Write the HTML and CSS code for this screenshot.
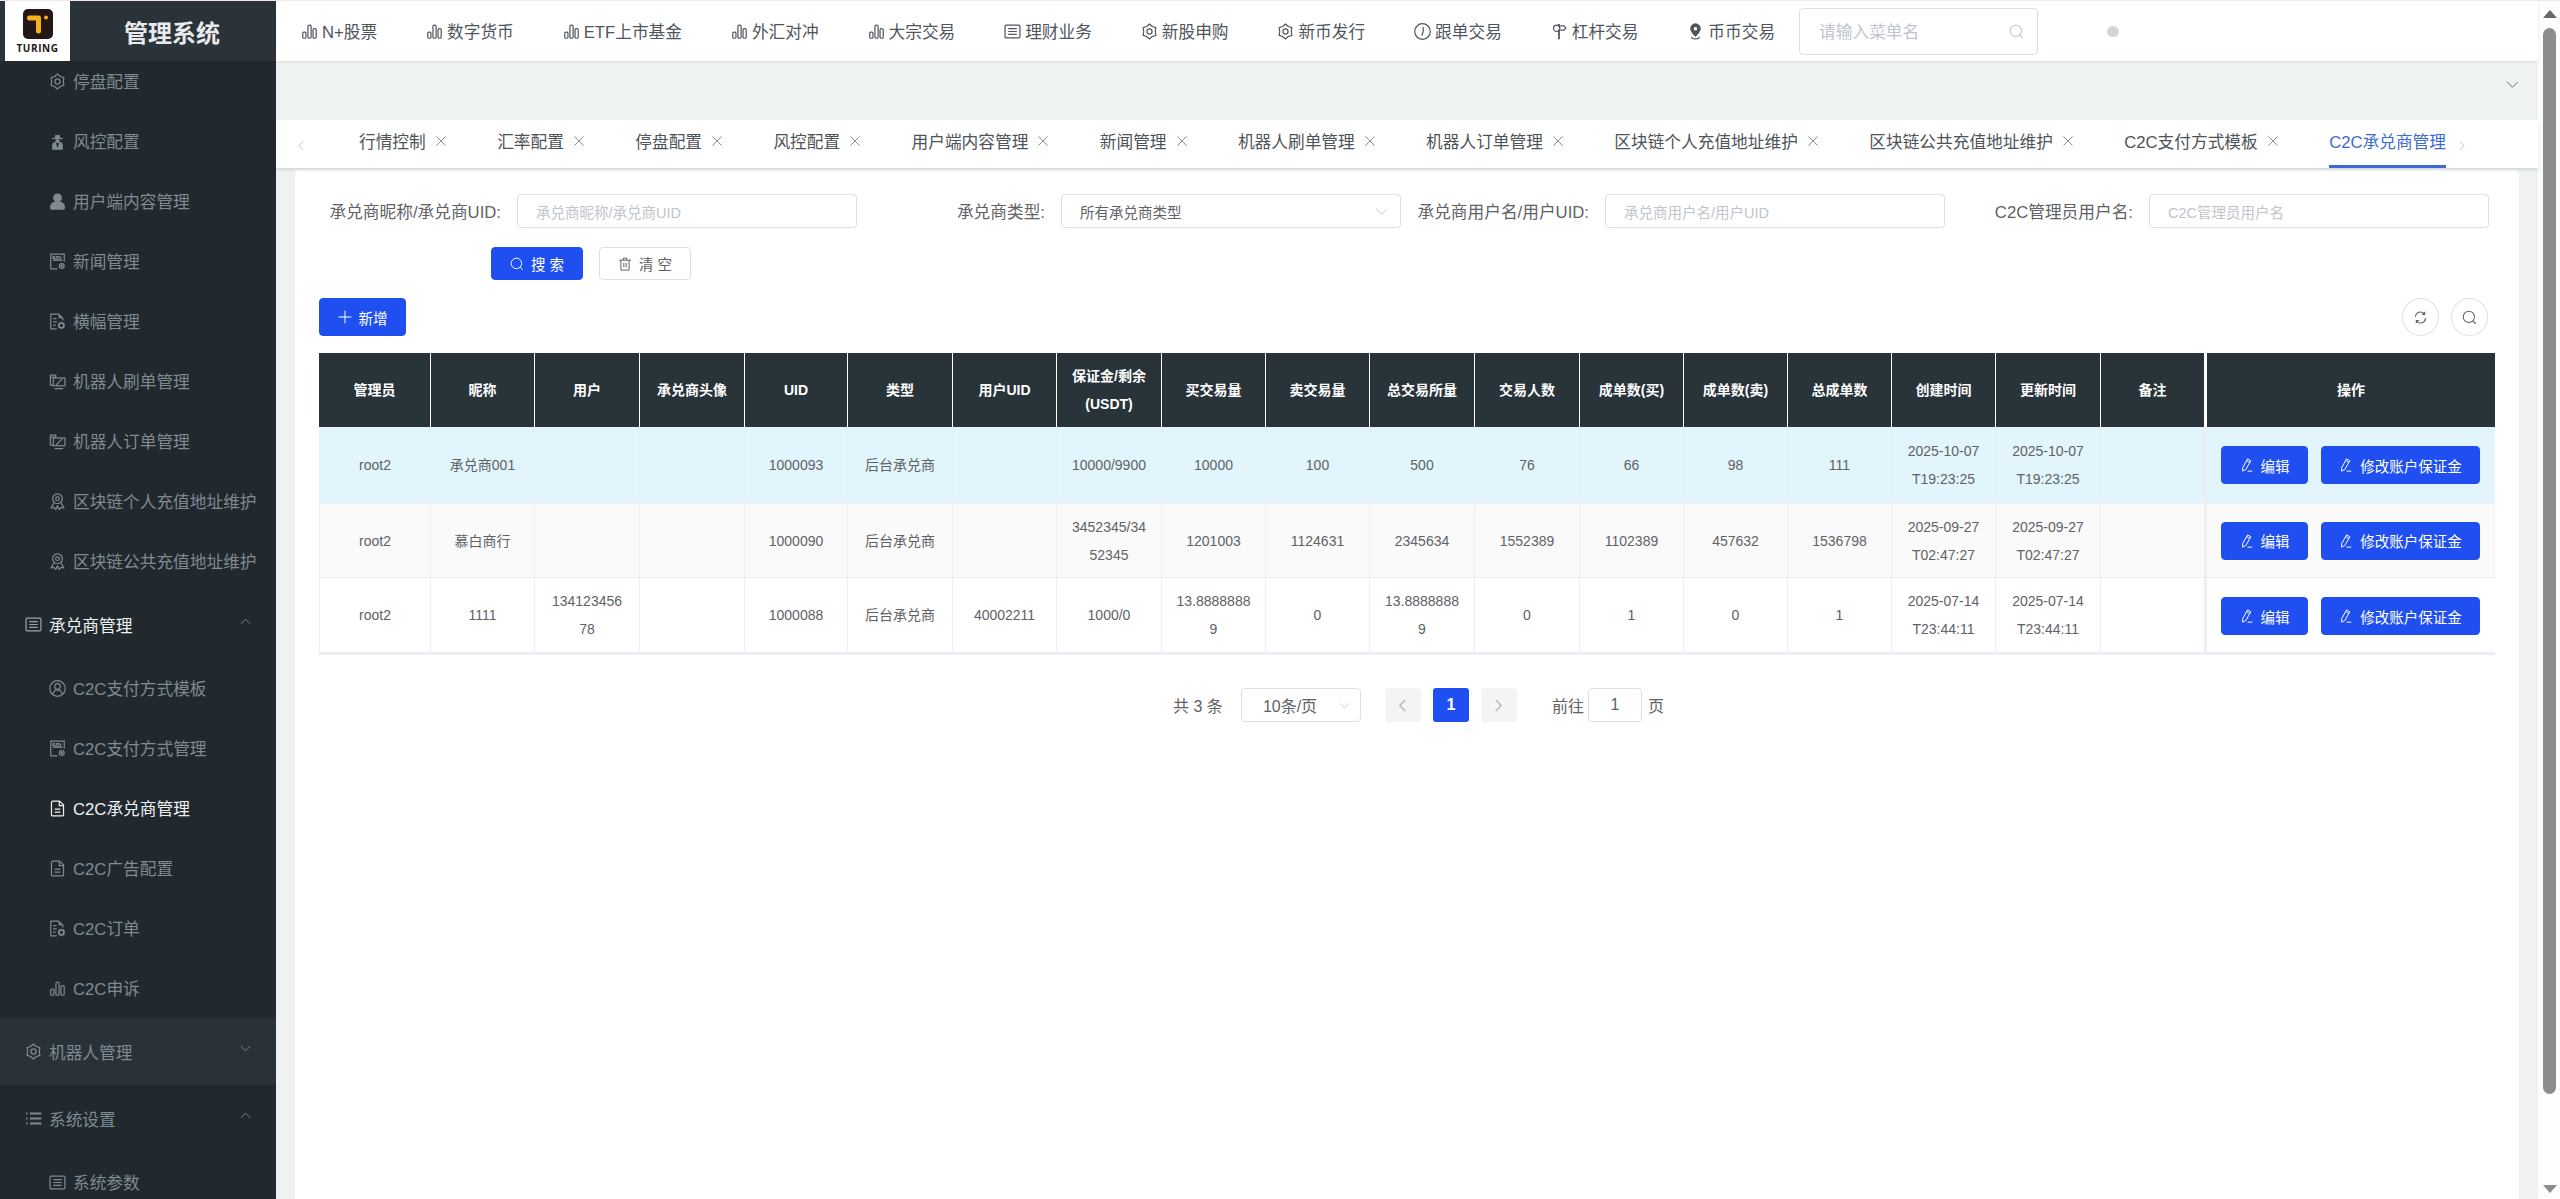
FILE: index.html
```html
<!DOCTYPE html>
<html lang="zh-CN">
<head>
  <meta charset="UTF-8">
  <meta name="viewport" content="width=device-width, initial-scale=1.0">
  <title>管理系统</title>
  <link rel="stylesheet" href="styles.css">
</head>
<body>
<svg class="sprite" aria-hidden="true">
  <symbol id="i-bars" viewBox="0 0 24 24"><rect x="2.500" y="13" width="4.500" height="8.500" rx="1.500"/><rect x="9.800" y="3" width="4.500" height="18.500" rx="1.800"/><rect x="17" y="8" width="4.500" height="13.500" rx="1.800"/></symbol>
  <symbol id="i-gear" viewBox="0 0 24 24"><path stroke-linejoin="round" d="M12 1.500L16 5 21 6.500 20.200 12 21 17.500 16 19 12 22.500 8 19 3 17.500 3.800 12 3 6.500 8 5Z"/><circle cx="12" cy="12" r="3.600"/></symbol>
  <symbol id="i-spy" viewBox="0 0 24 24"><path class="solid" d="M8 7l1.200-5 2.800 1 2.800-1L16 7z"/><rect class="solid" x="4.500" y="7" width="15" height="1.600"/><circle class="solid" cx="12" cy="11.300" r="3"/><path class="solid" d="M4.500 23.500v-6.500c0-2.500 2-4 5-4.500L11.500 20h1l2-7.500c3 .5 5 2 5 4.500v6.500z"/></symbol>
  <symbol id="i-user" viewBox="0 0 24 24"><circle class="solid" cx="12" cy="7" r="6.200"/><path class="solid" d="M1.500 21v-2c0-4.500 5-7.500 10.500-7.500s10.500 3 10.500 7.500v2c0 1.500-1 2.500-2.500 2.500H4c-1.500 0-2.500-1-2.500-2.500z"/></symbol>
  <symbol id="i-sql" viewBox="0 0 24 24"><path d="M12 22.500H2.500v-21h19v11"/><path d="M5.500 5h3.200M5.500 5v2.700h3.200v2.800H5.500M11 5h3v5.500h-3zM16.500 5v5.500h2.500"/><circle cx="18" cy="18.500" r="3.400"/><circle cx="18" cy="18.500" r="1"/></symbol>
  <symbol id="i-docgear" viewBox="0 0 24 24"><path d="M11 22.500H2.500v-21h11l6 6v3"/><path class="solid" d="M13.500 1.500l6 6h-6z"/><path d="M6 8h4.500M6 12.500h5M6 17h3.500"/><circle cx="17.500" cy="17.500" r="3.600" stroke-width="2.600"/></symbol>
  <symbol id="i-robot" viewBox="0 0 24 24"><path d="M6 17H2V3h7.500v4"/><path d="M2 6h7.500"/><rect x="6" y="7" width="16.500" height="11"/><path d="M10 17L19 8M8 22h12"/></symbol>
  <symbol id="i-medal" viewBox="0 0 24 24"><circle cx="12" cy="8" r="6.800"/><circle cx="12" cy="8" r="2.600"/><path stroke-linejoin="round" d="M7.500 13L3 21l4.500-.5 2 3 2.500-5.500 2.500 5.500 2-3 4.500.5L16.500 13"/></symbol>
  <symbol id="i-usercircle" viewBox="0 0 24 24"><circle cx="12" cy="12" r="11"/><circle cx="12" cy="9.200" r="4"/><path d="M5.500 20c.8-3.800 3.500-6 6.500-6s5.700 2.200 6.500 6"/></symbol>
  <symbol id="i-doc" viewBox="0 0 24 24"><path stroke-linejoin="round" d="M3.500 3.500c0-1 .7-2 1.800-2H15l5.500 5.500v14c0 1-.7 1.500-1.800 1.500H5.300c-1.100 0-1.800-.5-1.800-1.500z"/><path d="M14.500 1.500V8h6M8 13h8M8 17h8"/></symbol>
  <symbol id="i-tickets" viewBox="0 0 24 24"><rect x="1.500" y="3" width="21" height="18" rx="1.500"/><path d="M6 8h12M6 12h12M6 16h12"/></symbol>
  <symbol id="i-list" viewBox="0 0 24 24"><path stroke-width="2.800" d="M7 5h16M7 12h16M7 19h16M1.500 5h2M1.500 12h2M1.500 19h2"/></symbol>
  <symbol id="i-clock" viewBox="0 0 24 24"><circle cx="12" cy="12" r="11"/><path d="M13 5.500v6.500l-2 6"/></symbol>
  <symbol id="i-lever" viewBox="0 0 24 24"><path class="solid" d="M10 1.500h2.500v4.500H10zM10 9h2.500v14H10z"/><circle cx="8" cy="7.500" r="4.500"/><path d="M13 4h5.500l2.500 3-2.500 3H13"/></symbol>
  <symbol id="i-pin" viewBox="0 0 24 24"><path class="solid" fill-rule="evenodd" d="M12 .5a7.500 7.500 0 0 0-7.500 7.500c0 4.500 7.500 11.500 7.500 11.500s7.500-7 7.500-11.500A7.500 7.500 0 0 0 12 .5zm0 5a2.500 2.500 0 1 1 0 5 2.500 2.500 0 0 1 0-5z"/><path d="M6.500 19.500c0 1.500 2.500 3 5.500 3s5.500-1.500 5.500-3"/></symbol>
  <symbol id="i-search" viewBox="0 0 24 24"><circle cx="11" cy="11" r="9"/><path d="M17.500 17.500L22 22"/></symbol>
  <symbol id="i-down" viewBox="0 0 24 24"><path d="M2 7l10 10L22 7"/></symbol>
  <symbol id="i-up" viewBox="0 0 24 24"><path d="M2 17L12 7l10 10"/></symbol>
  <symbol id="i-left" viewBox="0 0 24 24"><path d="M17 2L7 12l10 10"/></symbol>
  <symbol id="i-right" viewBox="0 0 24 24"><path d="M7 2l10 10L7 22"/></symbol>
  <symbol id="i-close" viewBox="0 0 24 24"><path d="M1 1l22 22M23 1L1 23"/></symbol>
  <symbol id="i-trash" viewBox="0 0 24 24"><path d="M2 5.500h20M9 5.500V2h6v3.500M5 5.500V22.500h14V5.500M10 10v7.500M14 10v7.500"/></symbol>
  <symbol id="i-refresh" viewBox="0 0 24 24"><path d="M4 11a8 8 0 0 1 14-5M20 13a8 8 0 0 1-14 5"/><path class="solid" d="M19.500 2v6h-6zM4.500 22v-6h6z"/></symbol>
  <symbol id="i-edit" viewBox="0 0 24 24"><path stroke-linejoin="round" d="M13 1.500l5.500 3.200-8.500 15L4.500 22.500l.2-6.200zM11.500 4.500l5.500 3.200M13 22.500h8"/></symbol>
  <symbol id="i-plus" viewBox="0 0 24 24"><path d="M12 1v22M1 12h22"/></symbol>
</svg>

<div class="page">
  <aside class="sidebar">
    <div class="brand">
      <div class="logo">
        <svg class="logo-mark" viewBox="0 0 30 30">
          <rect width="30" height="30" rx="5" fill="#231815"/>
          <path d="M6.500 9H15.500V22" fill="none" stroke="#f9b21d" stroke-width="5" stroke-linecap="round" stroke-linejoin="round"/>
          <circle cx="23" cy="8.500" r="2" fill="#f9b21d"/>
        </svg>
        <span class="logo-text">TURING</span>
      </div>
      <div class="brand-name">管理系统</div>
    </div>
    <div class="menu-scroll">
      <ul class="menu">
        <li class="sub"><svg class="ic"><use href="#i-gear"/></svg>停盘配置</li>
        <li class="sub"><svg class="ic"><use href="#i-spy"/></svg>风控配置</li>
        <li class="sub"><svg class="ic"><use href="#i-user"/></svg>用户端内容管理</li>
        <li class="sub"><svg class="ic"><use href="#i-sql"/></svg>新闻管理</li>
        <li class="sub"><svg class="ic"><use href="#i-docgear"/></svg>横幅管理</li>
        <li class="sub"><svg class="ic"><use href="#i-robot"/></svg>机器人刷单管理</li>
        <li class="sub"><svg class="ic"><use href="#i-robot"/></svg>机器人订单管理</li>
        <li class="sub"><svg class="ic"><use href="#i-medal"/></svg>区块链个人充值地址维护</li>
        <li class="sub"><svg class="ic"><use href="#i-medal"/></svg>区块链公共充值地址维护</li>
        <li class="group open"><svg class="ic"><use href="#i-tickets"/></svg>承兑商管理<svg class="ic-chev"><use href="#i-up"/></svg></li>
        <li class="sub"><svg class="ic"><use href="#i-usercircle"/></svg>C2C支付方式模板</li>
        <li class="sub"><svg class="ic"><use href="#i-sql"/></svg>C2C支付方式管理</li>
        <li class="sub active"><svg class="ic"><use href="#i-doc"/></svg>C2C承兑商管理</li>
        <li class="sub"><svg class="ic"><use href="#i-doc"/></svg>C2C广告配置</li>
        <li class="sub"><svg class="ic"><use href="#i-docgear"/></svg>C2C订单</li>
        <li class="sub"><svg class="ic"><use href="#i-bars"/></svg>C2C申诉</li>
        <li class="group hover"><svg class="ic"><use href="#i-gear"/></svg>机器人管理<svg class="ic-chev"><use href="#i-down"/></svg></li>
        <li class="group"><svg class="ic"><use href="#i-list"/></svg>系统设置<svg class="ic-chev"><use href="#i-up"/></svg></li>
        <li class="sub"><svg class="ic"><use href="#i-tickets"/></svg>系统参数</li>
      </ul>
    </div>
  </aside>

  <main class="main">
    <header class="topnav">
      <a class="nav-item"><svg class="ic"><use href="#i-bars"/></svg>N+股票</a>
      <a class="nav-item"><svg class="ic"><use href="#i-bars"/></svg>数字货币</a>
      <a class="nav-item"><svg class="ic"><use href="#i-bars"/></svg>ETF上市基金</a>
      <a class="nav-item"><svg class="ic"><use href="#i-bars"/></svg>外汇对冲</a>
      <a class="nav-item"><svg class="ic"><use href="#i-bars"/></svg>大宗交易</a>
      <a class="nav-item"><svg class="ic"><use href="#i-tickets"/></svg>理财业务</a>
      <a class="nav-item"><svg class="ic"><use href="#i-gear"/></svg>新股申购</a>
      <a class="nav-item"><svg class="ic"><use href="#i-gear"/></svg>新币发行</a>
      <a class="nav-item"><svg class="ic"><use href="#i-clock"/></svg>跟单交易</a>
      <a class="nav-item"><svg class="ic"><use href="#i-lever"/></svg>杠杆交易</a>
      <a class="nav-item"><svg class="ic"><use href="#i-pin"/></svg>币币交易</a>
      <div class="menu-search"><span>请输入菜单名</span><svg class="ic-search"><use href="#i-search"/></svg></div>
      <i class="nav-dot"></i>
    </header>

    <div class="crumb-bar"><svg class="ic-crumb"><use href="#i-down"/></svg></div>

    <nav class="tabs">
      <svg class="tab-arrow tab-prev"><use href="#i-left"/></svg>
      <a class="tab">行情控制<svg class="tab-x"><use href="#i-close"/></svg></a>
      <a class="tab">汇率配置<svg class="tab-x"><use href="#i-close"/></svg></a>
      <a class="tab">停盘配置<svg class="tab-x"><use href="#i-close"/></svg></a>
      <a class="tab">风控配置<svg class="tab-x"><use href="#i-close"/></svg></a>
      <a class="tab">用户端内容管理<svg class="tab-x"><use href="#i-close"/></svg></a>
      <a class="tab">新闻管理<svg class="tab-x"><use href="#i-close"/></svg></a>
      <a class="tab">机器人刷单管理<svg class="tab-x"><use href="#i-close"/></svg></a>
      <a class="tab">机器人订单管理<svg class="tab-x"><use href="#i-close"/></svg></a>
      <a class="tab">区块链个人充值地址维护<svg class="tab-x"><use href="#i-close"/></svg></a>
      <a class="tab">区块链公共充值地址维护<svg class="tab-x"><use href="#i-close"/></svg></a>
      <a class="tab">C2C支付方式模板<svg class="tab-x"><use href="#i-close"/></svg></a>
      <a class="tab active">C2C承兑商管理</a>
      <svg class="tab-arrow tab-next"><use href="#i-right"/></svg>
    </nav>

    <section class="card">
      <div class="search-form">
        <div class="form-item"><label>承兑商昵称/承兑商UID:</label><div class="input placeholder">承兑商昵称/承兑商UID</div></div>
        <div class="form-item"><label>承兑商类型:</label><div class="input select">所有承兑商类型<svg class="ic-select"><use href="#i-down"/></svg></div></div>
        <div class="form-item"><label>承兑商用户名/用户UID:</label><div class="input placeholder">承兑商用户名/用户UID</div></div>
        <div class="form-item"><label>C2C管理员用户名:</label><div class="input placeholder">C2C管理员用户名</div></div>
      </div>
      <div class="form-actions">
        <button class="btn btn-primary btn-form"><svg class="ic-btn"><use href="#i-search"/></svg>搜 索</button>
        <button class="btn btn-plain btn-form"><svg class="ic-btn"><use href="#i-trash"/></svg>清 空</button>
      </div>
      <div class="toolbar">
        <button class="btn btn-primary btn-add"><svg class="ic-btn"><use href="#i-plus"/></svg>新增</button>
        <div class="tool-icons">
          <button class="btn-circle"><svg class="ic-tool"><use href="#i-refresh"/></svg></button>
          <button class="btn-circle"><svg class="ic-tool"><use href="#i-search"/></svg></button>
        </div>
      </div>

      <table class="data-table">
        <colgroup>
          <col class="w112"><col class="w104"><col class="w105"><col class="w105"><col class="w103"><col class="w105"><col class="w104"><col class="w105"><col class="w104"><col class="w104"><col class="w105"><col class="w105"><col class="w104"><col class="w104"><col class="w104"><col class="w104"><col class="w105"><col class="w104"><col class="w290">
        </colgroup>
        <thead>
          <tr>
            <th>管理员</th><th>昵称</th><th>用户</th><th>承兑商头像</th><th>UID</th><th>类型</th><th>用户UID</th><th>保证金/剩余(USDT)</th><th>买交易量</th><th>卖交易量</th><th>总交易所量</th><th>交易人数</th><th>成单数(买)</th><th>成单数(卖)</th><th>总成单数</th><th>创建时间</th><th>更新时间</th><th>备注</th><th class="col-action">操作</th>
          </tr>
        </thead>
        <tbody>
          <tr class="row-a">
            <td>root2</td><td>承兑商001</td><td></td><td></td><td>1000093</td><td>后台承兑商</td><td></td><td>10000/9900</td><td>10000</td><td>100</td><td>500</td><td>76</td><td>66</td><td>98</td><td>111</td><td>2025-10-07T19:23:25</td><td>2025-10-07T19:23:25</td><td></td>
            <td class="col-action"><div class="row-btns"><button class="btn btn-primary btn-edit"><svg class="ic-btn"><use href="#i-edit"/></svg>编辑</button><button class="btn btn-primary btn-margin"><svg class="ic-btn"><use href="#i-edit"/></svg>修改账户保证金</button></div></td>
          </tr>
          <tr class="row-b">
            <td>root2</td><td>慕白商行</td><td></td><td></td><td>1000090</td><td>后台承兑商</td><td></td><td>3452345/3452345</td><td>1201003</td><td>1124631</td><td>2345634</td><td>1552389</td><td>1102389</td><td>457632</td><td>1536798</td><td>2025-09-27T02:47:27</td><td>2025-09-27T02:47:27</td><td></td>
            <td class="col-action"><div class="row-btns"><button class="btn btn-primary btn-edit"><svg class="ic-btn"><use href="#i-edit"/></svg>编辑</button><button class="btn btn-primary btn-margin"><svg class="ic-btn"><use href="#i-edit"/></svg>修改账户保证金</button></div></td>
          </tr>
          <tr class="row-c">
            <td>root2</td><td>1111</td><td>13412345678</td><td></td><td>1000088</td><td>后台承兑商</td><td>40002211</td><td>1000/0</td><td>13.88888889</td><td>0</td><td>13.88888889</td><td>0</td><td>1</td><td>0</td><td>1</td><td>2025-07-14T23:44:11</td><td>2025-07-14T23:44:11</td><td></td>
            <td class="col-action"><div class="row-btns"><button class="btn btn-primary btn-edit"><svg class="ic-btn"><use href="#i-edit"/></svg>编辑</button><button class="btn btn-primary btn-margin"><svg class="ic-btn"><use href="#i-edit"/></svg>修改账户保证金</button></div></td>
          </tr>
        </tbody>
      </table>

      <div class="pager">
        <span class="pager-total">共 3 条</span>
        <div class="pager-size">10条/页<svg class="ic-size"><use href="#i-down"/></svg></div>
        <div class="pager-btns">
          <button class="page-btn"><svg class="ic-page"><use href="#i-left"/></svg></button>
          <button class="page-btn current">1</button>
          <button class="page-btn"><svg class="ic-page"><use href="#i-right"/></svg></button>
        </div>
        <span class="pager-jump">前往</span>
        <div class="pager-input">1</div>
        <span class="pager-unit">页</span>
      </div>
    </section>
  </main>

  <div class="scrollbar">
    <i class="sb-up"></i>
    <div class="sb-thumb"></div>
    <i class="sb-down"></i>
  </div>
</div>
</body>
</html>
```

FILE: styles.css
```css
* {
  box-sizing: border-box;
}

html, body {
  margin: 0;
  height: 100%;
  overflow: hidden;
}

body {
  font-family: "Liberation Sans", "Noto Sans CJK SC", sans-serif;
  font-size: 14px;
  color: #606266;
  background: #fff;
  border-top: 1px solid #f3e6ec;
}

.sprite {
  display: none;
}

svg {
  fill: none;
  stroke: currentColor;
  stroke-width: 1.7;
}

.solid {
  fill: currentColor;
  stroke: none;
}

button {
  font-family: inherit;
  cursor: pointer;
}

.page {
  display: flex;
  height: 100%;
}

/* sidebar */
.sidebar {
  width: 276px;
  flex: none;
  display: flex;
  flex-direction: column;
  background: #21292e;
  color: #7f8a91;
}

.brand {
  height: 60px;
  flex: none;
  display: flex;
  align-items: center;
  padding-left: 5px;
  background: #2a333a;
}

.logo {
  width: 65px;
  height: 60px;
  display: flex;
  flex-direction: column;
  align-items: center;
  padding-top: 8px;
  background: #fff;
}

.logo-mark {
  width: 30px;
  height: 30px;
  stroke: none;
}

.logo-text {
  margin-top: 2px;
  font-family: "Open Sans", sans-serif;
  font-size: 10px;
  line-height: 14px;
  font-weight: 700;
  letter-spacing: 0.6px;
  color: #231815;
}

.brand-name {
  margin-left: 54px;
  font-size: 24px;
  font-weight: 700;
  color: #e8eaec;
}

.menu-scroll {
  flex: 1;
  overflow: hidden;
}

.menu {
  list-style: none;
  margin: -10px 0 0;
  padding: 0;
  font-size: 16.7px;
}

.menu li {
  display: flex;
  align-items: center;
}

.menu .sub {
  height: 60px;
  padding-left: 49px;
}

.menu .group {
  height: 67px;
  padding: 0 25px;
}

.menu .group.open,
.menu .active {
  color: #eef1f2;
}

.menu .group.open .ic {
  color: #9aa3a9;
}

.menu .hover {
  background: #293239;
}

.ic {
  width: 17px;
  height: 17px;
  flex: none;
  margin-right: 7px;
}

.ic-chev {
  width: 11px;
  height: 11px;
  margin-left: auto;
  margin-top: -6px;
  color: #7f8a91;
  stroke-width: 2;
}

/* main */
.main {
  flex: 1;
  min-width: 0;
  display: flex;
  flex-direction: column;
  background: #eef2f3;
}

.topnav {
  height: 60px;
  flex: none;
  display: flex;
  align-items: center;
  padding-left: 25px;
  background: #fff;
  box-shadow: 0 1px 3px rgba(0, 0, 0, 0.1);
  position: relative;
  font-size: 16.7px;
  color: #50555b;
}

.nav-item {
  display: flex;
  align-items: center;
  margin-right: 48.9px;
  white-space: nowrap;
}

.nav-item .ic {
  width: 17px;
  height: 17px;
  margin-right: 4px;
}

.nav-item:last-of-type {
  margin-right: 24px;
}

.menu-search {
  width: 239px;
  height: 47px;
  display: flex;
  align-items: center;
  justify-content: space-between;
  padding: 0 13px 0 19px;
  border: 1px solid #dcdfe6;
  border-radius: 4px;
  color: #c0c4cc;
}

.ic-search {
  width: 15px;
  height: 15px;
}

.nav-dot {
  width: 12px;
  height: 11px;
  margin-left: 69px;
  border-radius: 50%;
  background: #d2d4d7;
}

.crumb-bar {
  height: 59px;
  flex: none;
  display: flex;
  align-items: center;
  justify-content: flex-end;
  padding: 0 19px 13px 0;
}

.ic-crumb {
  width: 13px;
  height: 13px;
  color: #606266;
}

.tabs {
  height: 48px;
  flex: none;
  display: flex;
  align-items: stretch;
  padding-left: 20px;
  background: #fff;
  box-shadow: 0 2px 3px rgba(80, 80, 110, 0.16);
  position: relative;
  font-size: 16.7px;
  color: #4e5358;
}

.tab {
  display: flex;
  align-items: center;
  padding-bottom: 3px;
  margin-right: 51.4px;
  white-space: nowrap;
  border-bottom: 3px solid transparent;
}

.tab.active {
  margin-right: 0;
  color: #3d6bd4;
  border-bottom-color: #3d6bd4;
}

.tab-x {
  width: 10px;
  height: 10px;
  margin-left: 10px;
  stroke-width: 1.8;
  color: #666;
}

.tab-arrow {
  width: 10px;
  height: 13px;
  align-self: center;
  margin-top: 3px;
  color: #a8abb2;
  stroke-width: 1.8;
}

.tab-prev {
  margin-right: 53px;
}

.tab-next {
  margin-left: 11px;
}

/* card */
.card {
  flex: 1;
  margin: 2px 19px 0;
  padding: 25px 24px 0;
  background: #fff;
  border-radius: 4px 4px 0 0;
}

.search-form {
  display: grid;
  grid-template-columns: repeat(4, 1fr);
  margin: -1px 6px 0 -6px;
}

.form-item {
  display: flex;
  align-items: center;
  justify-content: flex-end;
  font-size: 16.7px;
  color: #606266;
}

.form-item label {
  margin-right: 16px;
  white-space: nowrap;
}

.input {
  width: 340px;
  height: 34px;
  display: flex;
  align-items: center;
  padding: 0 12px 0 18px;
  border: 1px solid #dcdfe6;
  border-radius: 4px;
  font-size: 14.5px;
}

.placeholder {
  color: #c0c4cc;
}

.select {
  justify-content: space-between;
}

.ic-select {
  width: 13px;
  height: 13px;
  color: #c0c4cc;
}

.form-actions {
  display: flex;
  gap: 16px;
  margin: 19px 0 0 172px;
}

.btn {
  display: inline-flex;
  align-items: center;
  justify-content: center;
  border-radius: 4px;
  font-size: 14.5px;
  white-space: nowrap;
}

.btn-primary {
  border: 1px solid #1f4ff0;
  background: #1f4ff0;
  color: #fff;
}

.btn-plain {
  border: 1px solid #dcdfe6;
  background: #fff;
  color: #606266;
}

.btn-form {
  width: 92px;
  height: 33px;
  padding: 0;
}

.ic-btn {
  width: 14px;
  height: 14px;
  margin-right: 7px;
  flex: none;
}

.toolbar {
  display: flex;
  align-items: center;
  justify-content: space-between;
  margin-top: 18px;
  padding-right: 7px;
}

.btn-add {
  width: 87px;
  height: 38px;
  padding: 0;
}

.tool-icons {
  display: flex;
  gap: 12px;
}

.btn-circle {
  width: 37px;
  height: 38px;
  display: flex;
  align-items: center;
  justify-content: center;
  padding: 0;
  border: 1px solid #dcdfe6;
  border-radius: 50%;
  background: #fff;
  color: #606266;
}

.ic-tool {
  width: 15px;
  height: 15px;
}

/* table */
.data-table {
  width: 2176px;
  margin-top: 17px;
  table-layout: fixed;
  border-collapse: separate;
  border-spacing: 0;
  border-bottom: 2px solid #ebeef5;
  text-align: center;
}

.w103 { width: 103px; }
.w104 { width: 104px; }
.w105 { width: 105px; }
.w112 { width: 112px; }
.w290 { width: 290px; }

.data-table th,
.data-table td {
  padding: 0 14px;
  line-height: 28px;
  word-break: break-all;
  border-right: 1px solid #ebeef5;
  border-bottom: 1px solid #ebeef5;
}

.data-table th {
  height: 74px;
  background: #29333a;
  color: #fff;
  font-weight: 700;
  border-right-color: #fff;
  border-bottom: 0;
}

.data-table td:first-child {
  border-left: 1px solid #ebeef5;
}

.data-table th:last-child,
.data-table td:last-child {
  border-right: 0;
}

.data-table .col-action {
  border-left: 2px solid #ebeef5;
  padding: 0;
}

.data-table th.col-action {
  border-left-color: #fff;
}

.row-a td { height: 77px; background: #e2f4fc; }
.row-b td { height: 74px; background: #fafafa; }
.row-c td { height: 75px; background: #fff; }

.row-btns {
  display: flex;
  justify-content: flex-start;
  gap: 13px;
  padding-left: 14px;
}

.row-c .row-btns {
  padding-top: 2px;
}

.btn-edit {
  width: 87px;
  height: 38px;
  padding: 0;
}

.btn-margin {
  width: 159px;
  height: 38px;
  padding: 0;
}

/* pagination */
.pager {
  display: flex;
  align-items: center;
  justify-content: center;
  margin-top: 33px;
  padding-left: 23px;
  font-size: 16px;
  color: #606266;
}

.pager-size {
  width: 120px;
  height: 34px;
  display: flex;
  align-items: center;
  justify-content: space-between;
  margin-left: 18px;
  padding: 0 10px 0 21px;
  border: 1px solid #dcdfe6;
  border-radius: 4px;
}

.ic-size {
  width: 11px;
  height: 11px;
  color: #c0c4cc;
}

.pager-btns {
  display: flex;
  gap: 12px;
  margin-left: 24px;
}

.page-btn {
  width: 36px;
  height: 34px;
  display: flex;
  align-items: center;
  justify-content: center;
  padding: 0;
  border: 0;
  border-radius: 3px;
  background: #f3f4f6;
  color: #b4b8c0;
  font-size: 16px;
  font-weight: 700;
}

.page-btn.current {
  background: #1f4ff0;
  color: #fff;
}

.ic-page {
  width: 13px;
  height: 13px;
  stroke-width: 2.6;
}

.pager-jump {
  margin-left: 35px;
}

.pager-input {
  width: 54px;
  height: 34px;
  display: flex;
  align-items: center;
  justify-content: center;
  margin-left: 4px;
  border: 1px solid #dcdfe6;
  border-radius: 4px;
}

.pager-unit {
  margin-left: 6px;
}

/* browser scrollbar */
.scrollbar {
  width: 22px;
  flex: none;
  display: flex;
  flex-direction: column;
  align-items: center;
  padding: 9px 0 6px 1px;
  background: #fdfdfd;
}

.sb-thumb {
  width: 13px;
  height: 1066px;
  margin-top: 10px;
  border-radius: 7px;
  background: #8c8c8c;
}

.sb-up,
.sb-down {
  width: 0;
  height: 0;
  border-left: 7px solid transparent;
  border-right: 7px solid transparent;
}

.sb-up {
  border-bottom: 8px solid #666;
}

.sb-down {
  margin-top: auto;
  border-top: 8px solid #8c8c8c;
}
```
